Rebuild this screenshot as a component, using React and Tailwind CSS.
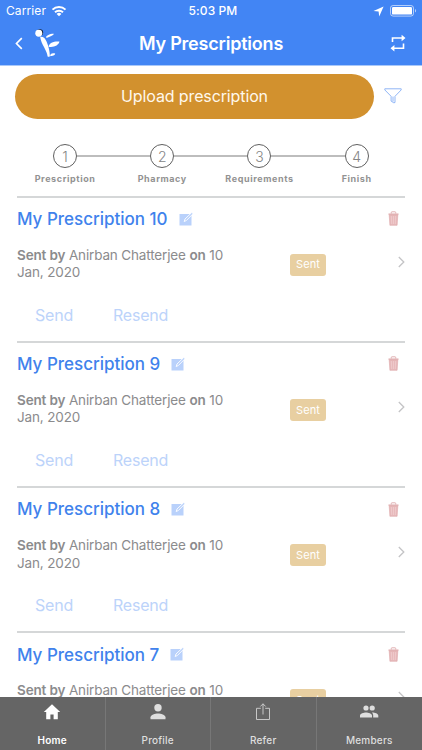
import { useState } from 'react';

const steps = ['Prescription', 'Pharmacy', 'Requirements', 'Finish'];

const prescriptions = [
    { id: 10, sender: 'Anirban Chatterjee', date: '10 Jan, 2020', status: 'Sent' },
    { id: 9, sender: 'Anirban Chatterjee', date: '10 Jan, 2020', status: 'Sent' },
    { id: 8, sender: 'Anirban Chatterjee', date: '10 Jan, 2020', status: 'Sent' },
    { id: 7, sender: 'Anirban Chatterjee', date: '10 Jan, 2020', status: 'Sent' },
];

const tabs = [
    { name: 'Home', icon: HomeIcon },
    { name: 'Profile', icon: ProfileIcon },
    { name: 'Refer', icon: ShareIcon },
    { name: 'Members', icon: MembersIcon },
];

function WifiIcon() {
    return (
        <svg width="16" height="12" viewBox="0 0 16 12" fill="none" stroke="white" strokeWidth="2">
            <path d="M1.5 4.6a9.4 9.4 0 0 1 13 0" />
            <path d="M4 7.3a5.7 5.7 0 0 1 8 0" />
            <path d="M8 11.3 5.6 9a3.4 3.4 0 0 1 4.8 0z" fill="white" stroke="none" />
        </svg>
    );
}

function LocationIcon() {
    return (
        <svg width="11" height="11" viewBox="0 0 11 11" fill="white">
            <path d="M10.6.4 6.2 10.4 5.6 5.5.5 5.1z" />
        </svg>
    );
}

function BatteryIcon() {
    return (
        <svg width="27" height="12" viewBox="0 0 27 12">
            <rect x=".5" y=".5" width="23" height="10.6" rx="2.6" fill="none" stroke="white" strokeOpacity=".6" />
            <rect x="2" y="2" width="20" height="7.6" rx="1.2" fill="white" />
            <path d="M25 4c1.5.6 1.5 3 0 3.6z" fill="white" fillOpacity=".6" />
        </svg>
    );
}

function Logo() {
    return (
        <svg width="26" height="30" viewBox="0 0 26 30" fill="white">
            <circle cx="5" cy="4.2" r="3.4" fill="#172238" />
            <circle cx="3.9" cy="5" r="3.6" />
            <path d="M5.3 8.6C8.8 8.300 10.600 10.400 12 13.600c2 4.600 3.200 9.800 3.300 15.100-.8.700-1.700.6-2.300.2C12.600 22.600 6.500 17 5.300 8.600z" />
            <path d="M11.400 8.700c1-2 5.200-3.700 8-3.300-.4 2.300-4.200 2.500-7.400 4.500z" />
            <path d="M14 18.800c.6-3.900 5.500-5.800 11.200-5.300-.8 3.900-5.600 6.200-11.200 5.300z" />
            <path d="M15.600 28.600c-.1-2.500 1.800-3.500 5.200-2.800-.2 2.100-3 2.500-5.200 2.800z" />
        </svg>
    );
}

function RepeatIcon() {
    return (
        <svg width="16" height="18" viewBox="0 0 16 18" fill="none" stroke="white" strokeWidth="1.6">
            <path d="M2.500 8V4h10M13.500 9.500v4.800h-10" />
            <path d="M11.600 .8 15.500 4l-3.900 3.200zM4.400 11.100.5 14.300l3.900 3.200z" fill="white" stroke="none" />
        </svg>
    );
}

function FilterIcon() {
    return (
        <svg width="18" height="16" viewBox="0 0 18 16" fill="none" stroke="#84aef5" strokeWidth=".9">
            <path d="M.8.8h16.400v1.100L11 8.300v6.200l-1.200.3-2.700-1.700V8.300L.8 1.900zM9 8.600v5" />
        </svg>
    );
}

function EditIcon() {
    return (
        <svg width="15" height="14" viewBox="0 0 15 14">
            <path d="M.5 2h12v11.500H.5z" fill="#b9d1fb" />
            <path d="m5.200 9.500.8-2.500L12.800.5l1.300 1.200-6.700 6.800z" fill="#b9d1fb" stroke="white" strokeWidth=".9" />
        </svg>
    );
}

function TrashIcon() {
    return (
        <svg width="11" height="15" viewBox="0 0 11 15">
            <path d="M3.300 2.500V1.400q0-.6.6-.6h3.200q.6 0 .6.6v1.100" fill="none" stroke="#dea8aa" strokeWidth=".9" />
            <path d="M.5 2.500h10v1.300H.5z" fill="#dea8aa" />
            <path d="m1.200 3.900.7 10.400h7.200l.7-10.400z" fill="#e7b9bb" stroke="#dea8aa" strokeWidth=".6" />
            <path d="m3.400 5 .3 8M5.500 5v8M7.600 5l-.3 8" stroke="#f0d0d1" strokeWidth=".7" />
        </svg>
    );
}

function Chevron() {
    return (
        <svg width="7" height="12" viewBox="0 0 7 12" fill="none" stroke="#c4c4c6" strokeWidth="1.300">
            <path d="m.8 1 5 5-5 5" />
        </svg>
    );
}

function HomeIcon() {
    return (
        <svg width="18" height="18" viewBox="0 0 18 18" fill="white">
            <path d="M9 1.200 17.200 9h-2.400v7.300h-4.200v-4.900H7.400v4.900H3.200V9H.8z" />
        </svg>
    );
}

function ProfileIcon() {
    return (
        <svg width="18" height="18" viewBox="0 0 18 18" fill="#dedede">
            <circle cx="9" cy="4.700" r="3.700" />
            <path d="M1.500 16.300v-2c0-2.300 4.700-3.700 7.500-3.700s7.500 1.400 7.500 3.700v2z" />
        </svg>
    );
}

function ShareIcon() {
    return (
        <svg width="18" height="18" viewBox="0 0 18 18" fill="none" stroke="#d2d2d2" strokeWidth=".9">
            <path d="M6.800 5.300H2.500v11.200h13V5.300h-4.300M9 11.500V.8M6.300 3.500 9 .8l2.700 2.700" />
        </svg>
    );
}

function MembersIcon() {
    return (
        <svg width="20" height="18" viewBox="0 0 20 18" fill="#dedede">
            <circle cx="7" cy="5" r="2.600" />
            <circle cx="13.200" cy="5" r="2.600" />
            <path d="M1 14.600v-2c0-2 3.700-3.200 6-3.200s6 1.200 6 3.200v2zM14.200 14.600v-2.200c0-1.200-.6-2.200-1.400-2.900 2.400-.2 6.500 1 6.500 3.100v2z" />
        </svg>
    );
}

function PrescriptionRow({ item }) {
    return (
        <li className="h-[145.300px] shrink-0 border-t-2 border-[#d5d7d8] flex flex-col">
            <div className="flex items-center justify-between h-[24px] mt-[10px] pr-[6px]">
                <div className="flex items-center gap-[11px]">
                    <h2 className="text-[17px] font-medium text-[#4082ec] tracking-[-0.010px] whitespace-nowrap">My Prescription {item.id}</h2>
                    <div className="pb-[2px]">
                        <EditIcon />
                    </div>
                </div>
                <div className="pb-[2px]">
                    <TrashIcon />
                </div>
            </div>
            <div className="flex mt-[15px] h-[36px]">
                <p className="w-[216px] shrink-0 text-[13.500px] leading-[17.500px] tracking-[-0.150px] text-[#8b8b8d]">
                    <b className="font-semibold">Sent by</b> {item.sender} <b className="font-semibold">on</b> {item.date}
                </p>
                <span className="ml-[57px] mt-[7px] w-[36px] h-[22px] rounded-[3px] bg-[#e8cfa1] text-white text-[11px] tracking-[0.100px] flex items-center justify-center">
                    {item.status}
                </span>
                <div className="ml-auto mt-[9px]">
                    <Chevron />
                </div>
            </div>
            <div className="flex mt-[22px] pl-[18px] text-[16px] leading-[20px] tracking-[-0.200px] text-[#bcd3fa]">
                <button className="w-[78px] text-left">Send</button>
                <button>Resend</button>
            </div>
        </li>
    );
}

export default function App() {
    const [activeTab, setActiveTab] = useState('Home');

    return (
        <div className="h-[750px] w-full flex flex-col overflow-hidden bg-white font-['Inter',sans-serif]">

            {/* Status bar + header */}
            <header className="h-[66px] shrink-0 bg-[#4285f4] border-b border-[#a9c8f9] text-white">
                <div className="grid grid-cols-3 items-center h-[22px] px-[6px] text-[12px]">
                    <div className="flex items-center gap-[5px]">
                        <span className="tracking-[0.100px]">Carrier</span>
                        <WifiIcon />
                    </div>
                    <span className="text-center font-medium tracking-[0.100px] pl-[4px]">5:03 PM</span>
                    <div className="flex items-center justify-end gap-[6px] -mr-[1px]">
                        <LocationIcon />
                        <BatteryIcon />
                    </div>
                </div>
                <div className="grid grid-cols-[60px_1fr_60px] items-center h-[42px]">
                    <div className="flex items-center pl-[15px] gap-[12px]">
                        <svg width="8" height="13" viewBox="0 0 8 13" fill="none" stroke="white" strokeWidth="1.700">
                            <path d="M7 1 1.500 6.500 7 12" />
                        </svg>
                        <Logo />
                    </div>
                    <h1 className="text-center text-[18px] font-semibold tracking-[-0.200px]">My Prescriptions</h1>
                    <div className="flex justify-end pr-[16px]">
                        <RepeatIcon />
                    </div>
                </div>
            </header>

            <main className="flex-1 min-h-0 overflow-hidden flex flex-col">
                {/* Upload + filter */}
                <div className="flex items-center shrink-0 mt-[7.500px] pl-[15px] gap-[10px]">
                    <button className="w-[359px] h-[45.500px] rounded-full bg-[#d2912e] text-[#fff8ec] text-[16px] tracking-[-0.120px]">Upload prescription</button>
                    <FilterIcon />
                </div>

                {/* Progress steps */}
                <ol className="flex shrink-0 mt-[25px] pl-[16.500px] h-[51.500px]">
                    {steps.map((step, idx) => (
                        <li key={step} className="w-[97.200px] flex flex-col items-center">
                            <div className="flex items-center w-full">
                                <span className={`h-[1.500px] flex-1 ${idx === 0 ? 'bg-transparent' : 'bg-[#bdbdbd]'}`} />
                                <span className="size-[24px] rounded-full border border-[#606060] flex items-center justify-center text-[14px] font-light text-[#858585]">
                                    {idx + 1}
                                </span>
                                <span className={`h-[1.500px] flex-1 ${idx === steps.length - 1 ? 'bg-transparent' : 'bg-[#bdbdbd]'}`} />
                            </div>
                            <span className="mt-[5px] text-[9px] leading-[12px] font-bold tracking-[0.600px] text-[#929292]">{step}</span>
                        </li>
                    ))}
                </ol>

                <ul className="flex flex-col px-[17px]">
                    {prescriptions.map((item) => (
                        <PrescriptionRow key={item.id} item={item} />
                    ))}
                </ul>
            </main>

            {/* Tab bar */}
            <nav className="h-[53px] shrink-0 grid grid-cols-4 bg-[#656565]">
                {tabs.map(({ name, icon: Icon }) => (
                    <button
                        key={name}
                        onClick={() => setActiveTab(name)}
                        className={`flex flex-col items-center pt-[6px] border-r border-[#777777] last:border-r-0 text-[10px] leading-[12px] tracking-[0.200px] ${activeTab === name
                            ? 'text-white font-semibold'
                            : 'text-[#dedede] font-medium'
                            }`}
                    >
                        <Icon />
                        <span className="mt-[13px]">{name}</span>
                    </button>
                ))}
            </nav>
        </div>
    );
}
